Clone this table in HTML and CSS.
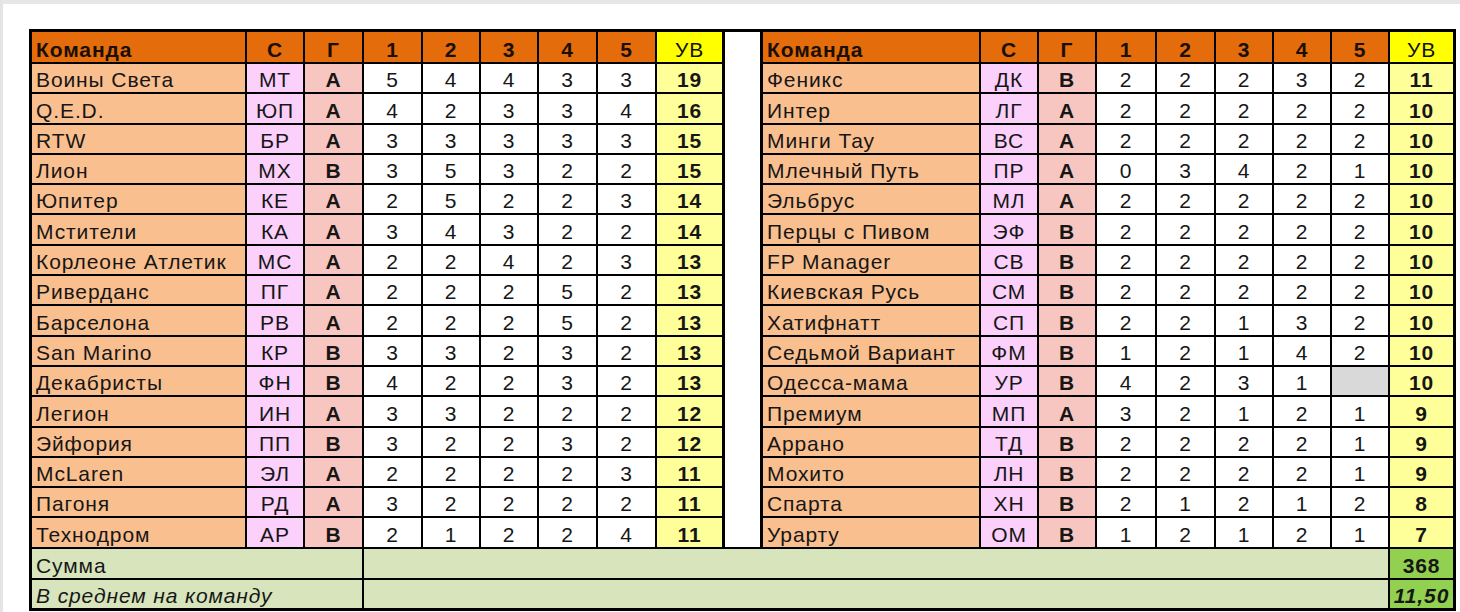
FILE: index.html
```html
<!DOCTYPE html>
<html lang="ru">
<head>
<meta charset="utf-8">
<title>Таблица</title>
<link rel="stylesheet" href="styles.css">
</head>
<body>
<div class="topbar"></div>
<div class="sheet">
  <div class="gp"></div>

  <div class="h hn">Команда</div><div class="h">С</div><div class="h">Г</div><div class="h">1</div><div class="h">2</div><div class="h">3</div><div class="h">4</div><div class="h">5</div><div class="hy">УВ</div>
  <div class="h hn">Команда</div><div class="h">С</div><div class="h">Г</div><div class="h">1</div><div class="h">2</div><div class="h">3</div><div class="h">4</div><div class="h">5</div><div class="hy">УВ</div>

  <div class="n">Воины Света</div><div class="c">МТ</div><div class="g">А</div><div class="v">5</div><div class="v">4</div><div class="v">4</div><div class="v">3</div><div class="v">3</div><div class="u">19</div>
  <div class="n">Феникс</div><div class="c">ДК</div><div class="g">В</div><div class="v">2</div><div class="v">2</div><div class="v">2</div><div class="v">3</div><div class="v">2</div><div class="u">11</div>

  <div class="n">Q.E.D.</div><div class="c">ЮП</div><div class="g">А</div><div class="v">4</div><div class="v">2</div><div class="v">3</div><div class="v">3</div><div class="v">4</div><div class="u">16</div>
  <div class="n">Интер</div><div class="c">ЛГ</div><div class="g">А</div><div class="v">2</div><div class="v">2</div><div class="v">2</div><div class="v">2</div><div class="v">2</div><div class="u">10</div>

  <div class="n">RTW</div><div class="c">БР</div><div class="g">А</div><div class="v">3</div><div class="v">3</div><div class="v">3</div><div class="v">3</div><div class="v">3</div><div class="u">15</div>
  <div class="n">Минги Тау</div><div class="c">ВС</div><div class="g">А</div><div class="v">2</div><div class="v">2</div><div class="v">2</div><div class="v">2</div><div class="v">2</div><div class="u">10</div>

  <div class="n">Лион</div><div class="c">МХ</div><div class="g">В</div><div class="v">3</div><div class="v">5</div><div class="v">3</div><div class="v">2</div><div class="v">2</div><div class="u">15</div>
  <div class="n">Млечный Путь</div><div class="c">ПР</div><div class="g">А</div><div class="v">0</div><div class="v">3</div><div class="v">4</div><div class="v">2</div><div class="v">1</div><div class="u">10</div>

  <div class="n">Юпитер</div><div class="c">КЕ</div><div class="g">А</div><div class="v">2</div><div class="v">5</div><div class="v">2</div><div class="v">2</div><div class="v">3</div><div class="u">14</div>
  <div class="n">Эльбрус</div><div class="c">МЛ</div><div class="g">А</div><div class="v">2</div><div class="v">2</div><div class="v">2</div><div class="v">2</div><div class="v">2</div><div class="u">10</div>

  <div class="n">Мстители</div><div class="c">КА</div><div class="g">А</div><div class="v">3</div><div class="v">4</div><div class="v">3</div><div class="v">2</div><div class="v">2</div><div class="u">14</div>
  <div class="n">Перцы с Пивом</div><div class="c">ЭФ</div><div class="g">В</div><div class="v">2</div><div class="v">2</div><div class="v">2</div><div class="v">2</div><div class="v">2</div><div class="u">10</div>

  <div class="n">Корлеоне Атлетик</div><div class="c">МС</div><div class="g">А</div><div class="v">2</div><div class="v">2</div><div class="v">4</div><div class="v">2</div><div class="v">3</div><div class="u">13</div>
  <div class="n">FP Manager</div><div class="c">СВ</div><div class="g">В</div><div class="v">2</div><div class="v">2</div><div class="v">2</div><div class="v">2</div><div class="v">2</div><div class="u">10</div>

  <div class="n">Риверданс</div><div class="c">ПГ</div><div class="g">А</div><div class="v">2</div><div class="v">2</div><div class="v">2</div><div class="v">5</div><div class="v">2</div><div class="u">13</div>
  <div class="n">Киевская Русь</div><div class="c">СМ</div><div class="g">В</div><div class="v">2</div><div class="v">2</div><div class="v">2</div><div class="v">2</div><div class="v">2</div><div class="u">10</div>

  <div class="n">Барселона</div><div class="c">РВ</div><div class="g">А</div><div class="v">2</div><div class="v">2</div><div class="v">2</div><div class="v">5</div><div class="v">2</div><div class="u">13</div>
  <div class="n">Хатифнатт</div><div class="c">СП</div><div class="g">В</div><div class="v">2</div><div class="v">2</div><div class="v">1</div><div class="v">3</div><div class="v">2</div><div class="u">10</div>

  <div class="n">San Marino</div><div class="c">КР</div><div class="g">В</div><div class="v">3</div><div class="v">3</div><div class="v">2</div><div class="v">3</div><div class="v">2</div><div class="u">13</div>
  <div class="n">Седьмой Вариант</div><div class="c">ФМ</div><div class="g">В</div><div class="v">1</div><div class="v">2</div><div class="v">1</div><div class="v">4</div><div class="v">2</div><div class="u">10</div>

  <div class="n">Декабристы</div><div class="c">ФН</div><div class="g">В</div><div class="v">4</div><div class="v">2</div><div class="v">2</div><div class="v">3</div><div class="v">2</div><div class="u">13</div>
  <div class="n">Одесса-мама</div><div class="c">УР</div><div class="g">В</div><div class="v">4</div><div class="v">2</div><div class="v">3</div><div class="v">1</div><div class="v empty"></div><div class="u">10</div>

  <div class="n">Легион</div><div class="c">ИН</div><div class="g">А</div><div class="v">3</div><div class="v">3</div><div class="v">2</div><div class="v">2</div><div class="v">2</div><div class="u">12</div>
  <div class="n">Премиум</div><div class="c">МП</div><div class="g">А</div><div class="v">3</div><div class="v">2</div><div class="v">1</div><div class="v">2</div><div class="v">1</div><div class="u">9</div>

  <div class="n">Эйфория</div><div class="c">ПП</div><div class="g">В</div><div class="v">3</div><div class="v">2</div><div class="v">2</div><div class="v">3</div><div class="v">2</div><div class="u">12</div>
  <div class="n">Аррано</div><div class="c">ТД</div><div class="g">В</div><div class="v">2</div><div class="v">2</div><div class="v">2</div><div class="v">2</div><div class="v">1</div><div class="u">9</div>

  <div class="n">McLaren</div><div class="c">ЭЛ</div><div class="g">А</div><div class="v">2</div><div class="v">2</div><div class="v">2</div><div class="v">2</div><div class="v">3</div><div class="u">11</div>
  <div class="n">Мохито</div><div class="c">ЛН</div><div class="g">В</div><div class="v">2</div><div class="v">2</div><div class="v">2</div><div class="v">2</div><div class="v">1</div><div class="u">9</div>

  <div class="n">Пагоня</div><div class="c">РД</div><div class="g">А</div><div class="v">3</div><div class="v">2</div><div class="v">2</div><div class="v">2</div><div class="v">2</div><div class="u">11</div>
  <div class="n">Спарта</div><div class="c">ХН</div><div class="g">В</div><div class="v">2</div><div class="v">1</div><div class="v">2</div><div class="v">1</div><div class="v">2</div><div class="u">8</div>

  <div class="n">Технодром</div><div class="c">АР</div><div class="g">В</div><div class="v">2</div><div class="v">1</div><div class="v">2</div><div class="v">2</div><div class="v">4</div><div class="u">11</div>
  <div class="n">Урарту</div><div class="c">ОМ</div><div class="g">В</div><div class="v">1</div><div class="v">2</div><div class="v">1</div><div class="v">2</div><div class="v">1</div><div class="u">7</div>

  <div class="sl">Сумма</div><div class="sf"></div><div class="st">368</div>
  <div class="sl it">В среднем на команду</div><div class="sf"></div><div class="st it">11,50</div>
</div>
</body>
</html>
```
FILE: styles.css
```css
html, body {
  margin: 0;
  padding: 0;
  background: #ffffff;
}
body {
  border-left: 3px solid #e4e4e4;
  min-height: 612px;
  box-sizing: border-box;
  font-family: "Liberation Sans", Arial, sans-serif;
  font-size: 21px;
  letter-spacing: 0.9px;
  color: #161616;
}
.topbar {
  height: 4px;
  background: #e6e6e6;
}
.sheet {
  margin: 25px 0 0 26px;
  width: max-content;
  display: grid;
  grid-template-columns: 213px 56px 57px 57px 56px 56px 57px 57px 65px 37px 216px 56px 56px 58px 57px 56px 56px 56px 63px;
  grid-template-rows: 30px repeat(16, 28.3px) 29px 28px;
  gap: 2px;
  background: #000;
  border: 3px solid #000;
}
.sheet > div {
  display: flex;
  align-items: flex-end;
  justify-content: center;
  line-height: 24px;
  white-space: nowrap;
  overflow: hidden;
}
.gp {
  grid-column: 10;
  grid-row: 1 / 18;
  background: #ffffff;
  border-left: 1px solid #000;
  border-right: 1px solid #000;
}
.h {
  background: #e46c0a;
  font-weight: bold;
  color: #1a0f05;
}
.hn {
  justify-content: flex-start !important;
  padding-left: 4px;
}
.hy {
  background: #ffff00;
  color: #111;
}
.n {
  background: #fabf8f;
  justify-content: flex-start !important;
  padding-left: 4px;
}
.c {
  background: #fbd0fb;
}
.g {
  background: #f7c6c0;
  font-weight: bold;
}
.v {
  background: #ffffff;
}
.empty {
  background: #d9d9d9;
}
.u {
  background: #ffff99;
  font-weight: bold;
}
.sl {
  grid-column: 1 / span 3;
  background: #d7e4bc;
  justify-content: flex-start !important;
  padding-left: 4px;
}
.sf {
  grid-column: 4 / span 15;
  background: #d7e4bc;
}
.st {
  background: #92d050;
  font-weight: bold;
}
.it {
  font-style: italic;
}
```
